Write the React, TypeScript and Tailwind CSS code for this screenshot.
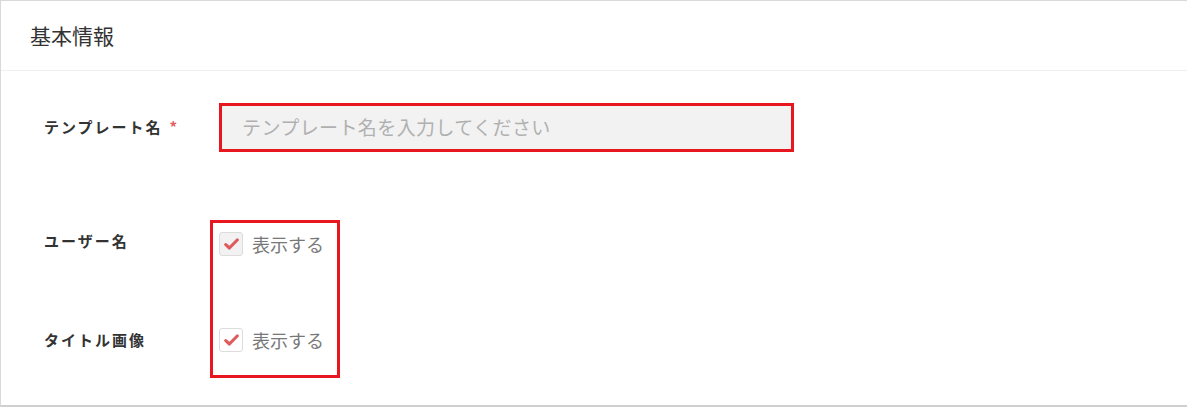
const font = { fontFamily: '"Noto Sans CJK JP", "Noto Sans", sans-serif' }

function Check({ filled }: { filled?: boolean }) {
  return (
    <span
      className={`flex h-[24px] w-[24px] items-center justify-center rounded-[3px] border border-[#dcdcdc] ${
        filled ? 'bg-[#f2f2f2]' : 'bg-white'
      }`}
    >
      <svg width="15" height="12" viewBox="0 0 15 12" fill="none">
        <path d="M1.8 6.6 L5.4 10 L13.2 2" stroke="#e05c5c" strokeWidth="3.2" strokeLinecap="round" strokeLinejoin="round" />
      </svg>
    </span>
  )
}

export default function App() {
  return (
    <div className="w-[1187px] h-[407px] bg-white" style={font}>
      <div className="border-l border-t border-[#d9d9d9] border-b-2 border-b-[#d0d0d0]">
        <div className="flex h-[70px] items-center border-b border-[#efefef] pl-[29px]">
          <h2 className="text-[21px] text-[#333] leading-none">基本情報</h2>
        </div>

        <div className="pl-[43px] pt-[32px] pb-[27px]">
          <div className="flex items-center">
            <div className="w-[175px] flex items-center text-[15px] font-bold tracking-[2px] text-[#333]">
              テンプレート名
              <span className="ml-[7px] text-[#e06060]">*</span>
            </div>
            <div className="h-[49px] w-[575px] border-[3px] border-[#e8161f] bg-[#f2f2f2] flex items-center pl-[20px]">
              <span className="text-[19px] tracking-[0.4px] text-[#b0b0b0]">テンプレート名を入力してください</span>
            </div>
          </div>

          <div className="mt-[68px] flex">
            <div className="w-[166px] pt-[12px] flex flex-col gap-[72px] text-[15px] font-bold tracking-[2px] text-[#333]">
              <div className="h-[24px] flex items-center -mt-[3px]">ユーザー名</div>
              <div className="h-[24px] flex items-center mt-[3px]">タイトル画像</div>
            </div>
            <div className="w-[130px] h-[158px] border-[3px] border-[#e8161f] pt-[9px] pl-[6px] flex flex-col gap-[72px]">
              <label className="flex items-center gap-[9px]">
                <Check filled />
                <span className="text-[18px] text-[#777] leading-none">表示する</span>
              </label>
              <label className="flex items-center gap-[9px]">
                <Check />
                <span className="text-[18px] text-[#777] leading-none">表示する</span>
              </label>
            </div>
          </div>
        </div>
      </div>
    </div>
  )
}
